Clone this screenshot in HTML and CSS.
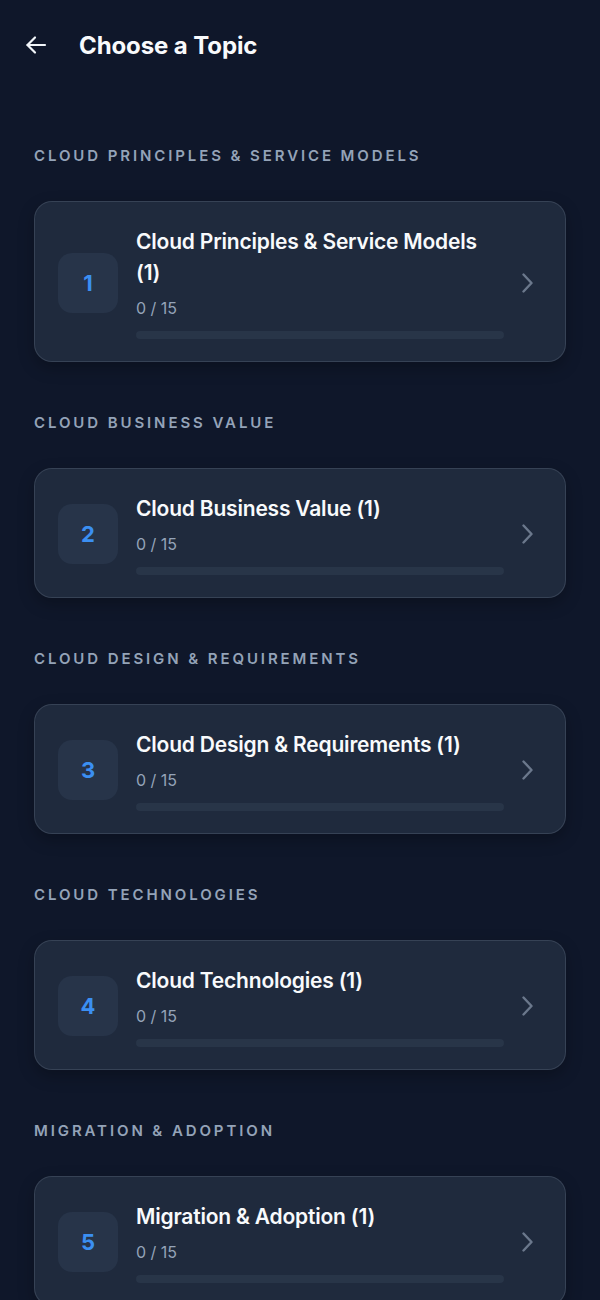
FILE: index.html
```html
<!DOCTYPE html>
<html>
<head>
<meta charset="utf-8">
<link rel="stylesheet" href="styles.css">
</head>
<body>
<header class="topbar">
  <svg class="back" width="24" height="24" viewBox="0 0 24 24" fill="none" stroke="#f1f5f9" stroke-width="2.2" stroke-linecap="round" stroke-linejoin="round"><path d="M21 12H3.5"/><path d="M11 4.5L3.5 12l7.5 7.5"/></svg>
  <h1 class="title">Choose a Topic</h1>
</header>
<main class="list">
  <section class="group">
    <h2 class="label">Cloud Principles &amp; Service Models</h2>
    <div class="card">
      <div class="badge">1</div>
      <div class="info">
        <div class="name">Cloud Principles &amp; Service Models (1)</div>
        <div class="meta">0 / 15</div>
        <div class="bar"><div class="fill" style="width:0%"></div></div>
      </div>
      <svg class="chev" width="20" height="20" viewBox="0 0 20 20" fill="none" stroke="#6b788c" stroke-width="2.4" stroke-linecap="round" stroke-linejoin="round"><path d="M3.5 1.5L11.5 10l-8 8.5"/></svg>
    </div>
  </section>
  <section class="group">
    <h2 class="label">Cloud Business Value</h2>
    <div class="card">
      <div class="badge">2</div>
      <div class="info">
        <div class="name">Cloud Business Value (1)</div>
        <div class="meta">0 / 15</div>
        <div class="bar"><div class="fill" style="width:0%"></div></div>
      </div>
      <svg class="chev" width="20" height="20" viewBox="0 0 20 20" fill="none" stroke="#6b788c" stroke-width="2.4" stroke-linecap="round" stroke-linejoin="round"><path d="M3.5 1.5L11.5 10l-8 8.5"/></svg>
    </div>
  </section>
  <section class="group">
    <h2 class="label">Cloud Design &amp; Requirements</h2>
    <div class="card">
      <div class="badge">3</div>
      <div class="info">
        <div class="name">Cloud Design &amp; Requirements (1)</div>
        <div class="meta">0 / 15</div>
        <div class="bar"><div class="fill" style="width:0%"></div></div>
      </div>
      <svg class="chev" width="20" height="20" viewBox="0 0 20 20" fill="none" stroke="#6b788c" stroke-width="2.4" stroke-linecap="round" stroke-linejoin="round"><path d="M3.5 1.5L11.5 10l-8 8.5"/></svg>
    </div>
  </section>
  <section class="group">
    <h2 class="label">Cloud Technologies</h2>
    <div class="card">
      <div class="badge">4</div>
      <div class="info">
        <div class="name">Cloud Technologies (1)</div>
        <div class="meta">0 / 15</div>
        <div class="bar"><div class="fill" style="width:0%"></div></div>
      </div>
      <svg class="chev" width="20" height="20" viewBox="0 0 20 20" fill="none" stroke="#6b788c" stroke-width="2.4" stroke-linecap="round" stroke-linejoin="round"><path d="M3.5 1.5L11.5 10l-8 8.5"/></svg>
    </div>
  </section>
  <section class="group">
    <h2 class="label">Migration &amp; Adoption</h2>
    <div class="card">
      <div class="badge">5</div>
      <div class="info">
        <div class="name">Migration &amp; Adoption (1)</div>
        <div class="meta">0 / 15</div>
        <div class="bar"><div class="fill" style="width:0%"></div></div>
      </div>
      <svg class="chev" width="20" height="20" viewBox="0 0 20 20" fill="none" stroke="#6b788c" stroke-width="2.4" stroke-linecap="round" stroke-linejoin="round"><path d="M3.5 1.5L11.5 10l-8 8.5"/></svg>
    </div>
  </section>
</main>
</body>
</html>
```

FILE: styles.css
```css
* { box-sizing: border-box; }
html, body {
  margin: 0;
  padding: 0;
  background: #0f172a;
  font-family: Inter, "Noto Sans", sans-serif;
  color: #f1f5f9;
}
body { min-height: 1300px; }
.topbar {
  height: 90px;
  display: flex;
  align-items: center;
  padding-left: 24px;
  gap: 31px;
}
.back { display: block; flex: none; }
.title {
  margin: 0;
  font-size: 24px;
  font-weight: 700;
  letter-spacing: -0.1px;
  color: #f8fafc;
}
.list {
  padding: 56px 34px 0;
  display: flex;
  flex-direction: column;
  gap: 51px;
}
.group {
  display: flex;
  flex-direction: column;
  gap: 35px;
}
.label {
  margin: 0;
  font-size: 15px;
  line-height: 20px;
  font-weight: 600;
  text-transform: uppercase;
  letter-spacing: 2.9px;
  color: #94a3b8;
}
.card {
  display: flex;
  align-items: center;
  padding: 24px 25px 22px 23px;
  background: #1f2a3d;
  border: 1px solid rgba(148, 163, 184, 0.2);
  border-radius: 18px;
  box-shadow: 0 6px 16px rgba(0, 0, 0, 0.25);
}
.badge {
  flex: none;
  width: 60px;
  height: 60px;
  border-radius: 14px;
  background: #273449;
  display: flex;
  align-items: center;
  justify-content: center;
  font-size: 22px;
  font-weight: 700;
  color: #3b8ff2;
}
.info {
  flex: 1;
  margin-left: 18px;
  display: flex;
  flex-direction: column;
}
.name {
  font-size: 21px;
  line-height: 31px;
  font-weight: 600;
  color: #f8fafc;
  letter-spacing: -0.2px;
}
.meta {
  margin-top: 8px;
  font-size: 16px;
  line-height: 24px;
  color: #94a3b8;
}
.bar {
  margin-top: 11px;
  height: 8px;
  border-radius: 4px;
  background: #283548;
  overflow: hidden;
}
.fill { height: 100%; background: #3b82f6; }
.chev { flex: none; margin-left: 16px; display: block; }
```
